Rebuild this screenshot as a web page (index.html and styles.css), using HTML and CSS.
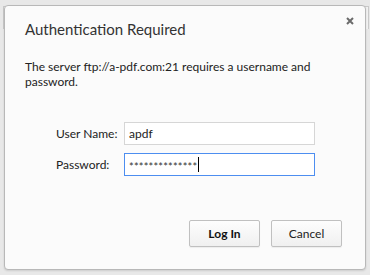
FILE: index.html
```html
<!DOCTYPE html>
<html lang="en">
<head>
  <meta charset="UTF-8">
  <title>Authentication Required</title>
  <link rel="stylesheet" href="styles.css">
</head>
<body>
  <!-- window behind the dialog -->
  <div class="behind"></div>
  <!-- login dialog -->
  <div class="dialog">
    <div class="head">
      <div class="title">Authentication Required</div>
      <svg class="close" width="8" height="8" viewBox="0 0 8 8"><path d="M1 1L7 7M7 1L1 7" stroke="#6b6b6b" stroke-width="2"/></svg>
    </div>
    <p class="msg">The server ftp://a-pdf.com:21 requires a username and password.</p>
    <div class="form">
      <div class="row">
        <label>User Name:</label>
        <div class="field">apdf</div>
      </div>
      <div class="row">
        <label>Password:</label>
        <div class="field focus"><span class="stars">**************</span><span class="caret"></span></div>
      </div>
    </div>
    <div class="btn-group">
      <button class="btn btn-default">Log In</button>
      <button class="btn">Cancel</button>
    </div>
  </div>
</body>
</html>
```

FILE: styles.css
```css
body { margin:0; background:#e8e8e8; font-family:Lato, 'Liberation Sans', Arial, sans-serif; color:#222; width:370px; height:275px; overflow:hidden; position:relative;}
.behind { margin:6px 0 0 3px; width:364px; height:22px; border:1px solid #c9c9c9; border-bottom:0; background:#f2f2f2;}
.dialog { position:absolute; left:4px; top:5px; width:360px; height:263px; border:1px solid #b8b8b8; border-radius:4px; background:#fbfbfb; display:flex; flex-direction:column; box-shadow:0 1px 2px rgba(0,0,0,.12);}
.head { display:flex; align-items:flex-start; padding:13px 11px 0 20px;}
.title { font-size:15px; color:#333; line-height:20px;}
.close { margin-left:auto; margin-top:-2px;}
.msg { margin:20px 20px 0 20px; font-size:12px; line-height:15px; color:#222;}
.form { display:flex; flex-direction:column; gap:8px; margin-top:33px; padding-left:51px;}
.row { display:flex; align-items:center;}
.row label { width:68px; font-size:12px; color:#222;}
.field { width:181px; height:21px; border:1px solid #d6d6d6; background:#fff; font-size:12px; line-height:21px; padding:0 4px; display:flex; align-items:center;}
.field.focus { border-color:#4d8ef0;}
.stars { font-size:11px; letter-spacing:.2px; color:#333; margin-top:3px;}
.caret { display:inline-block; width:1px; height:15px; background:#000; margin-left:1px;}
.btn-group { margin-top:auto; display:flex; justify-content:flex-end; gap:11px; padding:0 23px 22px 0;}
.btn { width:71px; height:27px; border:1px solid #c0c0c0; border-radius:2px; background:linear-gradient(#fdfdfd,#f0f0f0); font-family:inherit; font-size:12px; color:#222; padding:0; box-shadow:0 1px 1px rgba(0,0,0,.06);}
.btn-default { font-weight:700; color:#111;}
```
